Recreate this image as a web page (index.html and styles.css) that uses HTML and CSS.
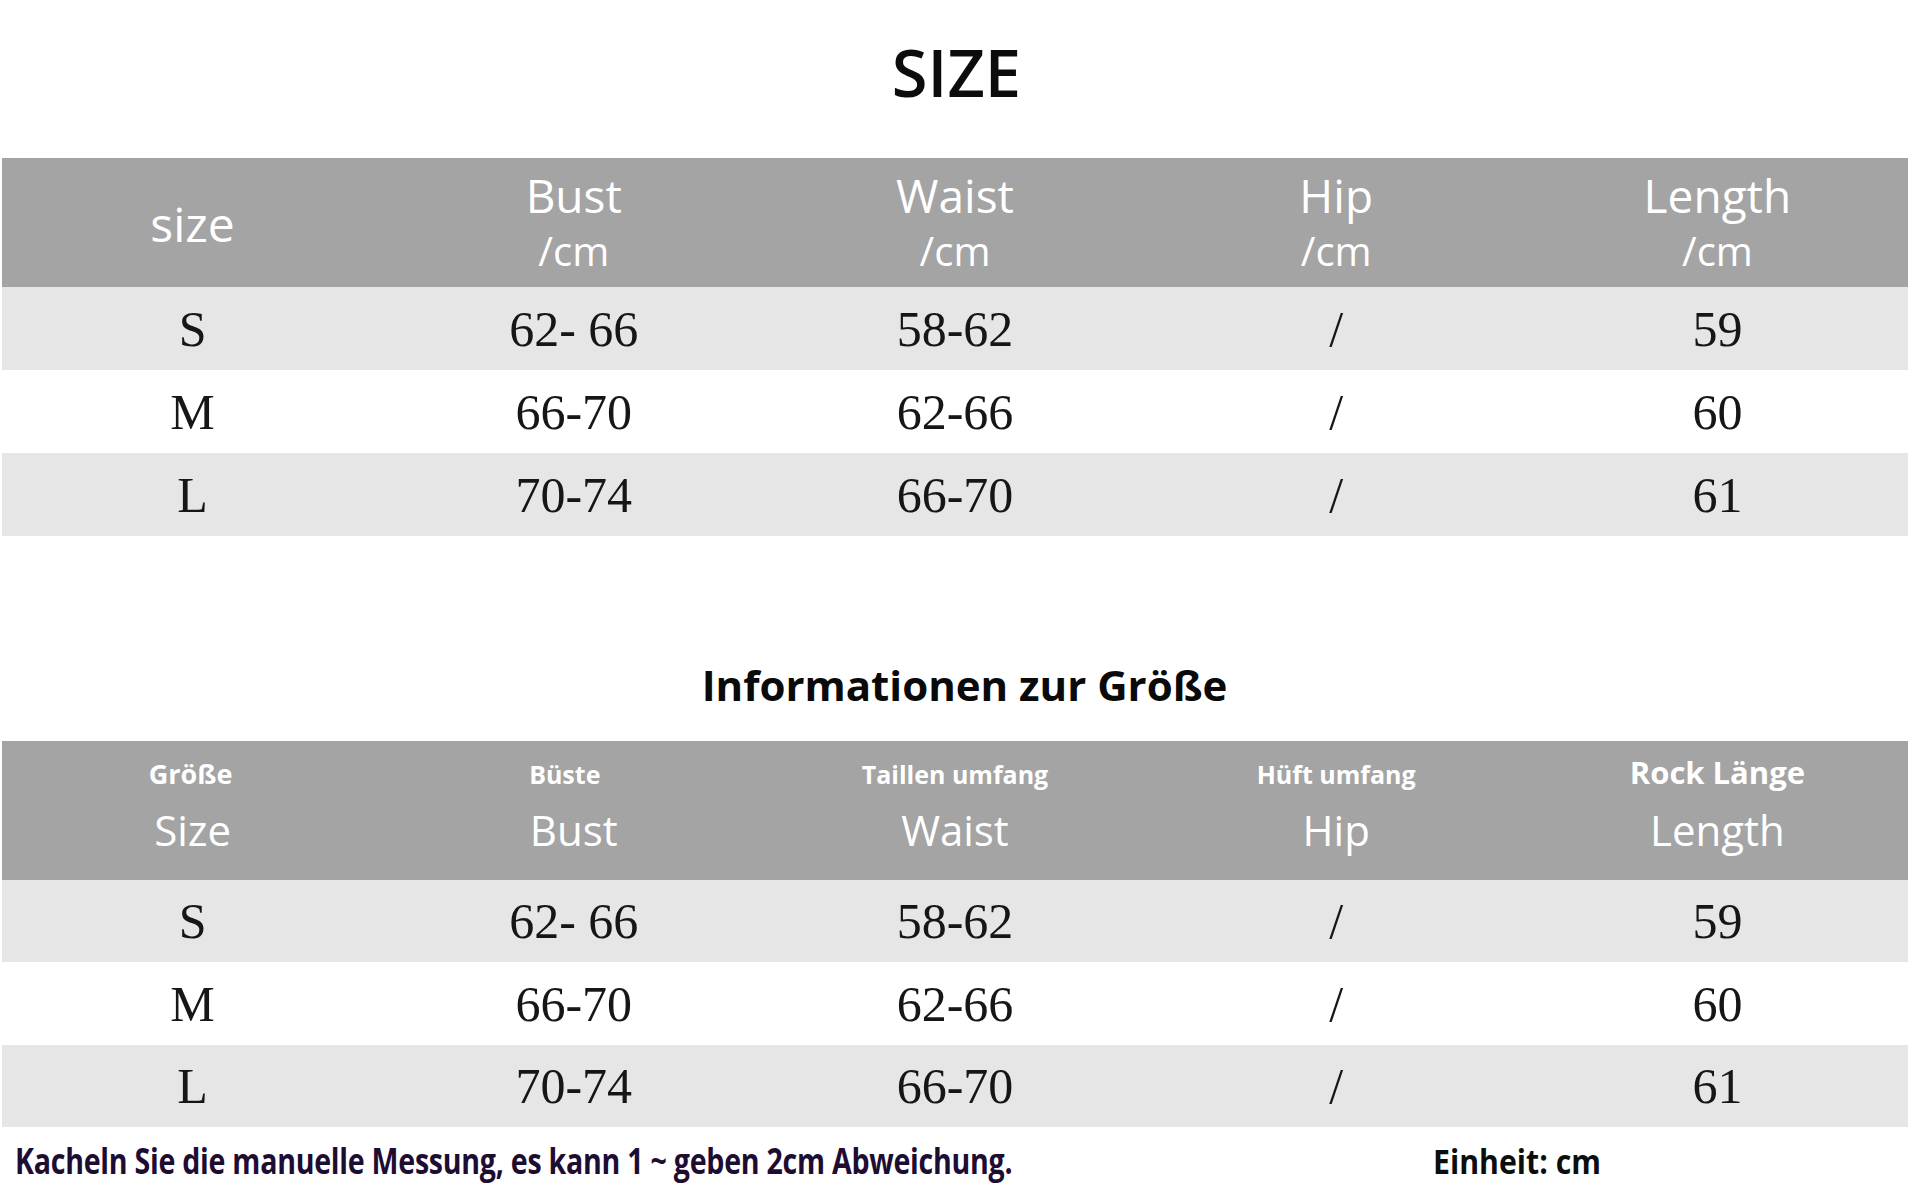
FILE: index.html
```html
<!DOCTYPE html>
<html lang="de">
<head>
<meta charset="utf-8">
<title>SIZE</title>
<link rel="stylesheet" href="styles.css">
</head>
<body>
<div class="page">
  <h1 class="title">SIZE</h1>

  <div class="table">
    <div class="head head-one">
      <div class="hcell hcell-center"><span class="hmain hsize">size</span></div>
      <div class="hcell"><span class="hmain">Bust</span><span class="hunit">/cm</span></div>
      <div class="hcell"><span class="hmain">Waist</span><span class="hunit">/cm</span></div>
      <div class="hcell"><span class="hmain">Hip</span><span class="hunit">/cm</span></div>
      <div class="hcell"><span class="hmain">Length</span><span class="hunit">/cm</span></div>
    </div>
    <div class="row shade"><span>S</span><span>62- 66</span><span>58-62</span><span>/</span><span>59</span></div>
    <div class="row"><span>M</span><span>66-70</span><span>62-66</span><span>/</span><span>60</span></div>
    <div class="row shade"><span>L</span><span>70-74</span><span>66-70</span><span>/</span><span>61</span></div>
  </div>

  <h2 class="subtitle">Informationen zur Größe</h2>

  <div class="table">
    <div class="head head-two">
      <span class="de de-size">Größe</span>
      <span class="de de-bust">Büste</span>
      <span class="de">Taillen umfang</span>
      <span class="de">Hüft umfang</span>
      <span class="de de-rock">Rock Länge</span>
      <span class="en">Size</span>
      <span class="en">Bust</span>
      <span class="en">Waist</span>
      <span class="en">Hip</span>
      <span class="en">Length</span>
    </div>
    <div class="row row-two shade"><span>S</span><span>62- 66</span><span>58-62</span><span>/</span><span>59</span></div>
    <div class="row row-two"><span>M</span><span>66-70</span><span>62-66</span><span>/</span><span>60</span></div>
    <div class="row row-two shade"><span>L</span><span>70-74</span><span>66-70</span><span>/</span><span>61</span></div>
  </div>

  <div class="footer">
    <p class="note"><span class="note-text">Kacheln Sie die manuelle Messung, es kann 1 ~ geben 2cm Abweichung.</span></p>
    <p class="unit"><span class="unit-text">Einheit: cm</span></p>
  </div>
</div>
</body>
</html>
```

FILE: styles.css
```css
* {
  box-sizing: border-box;
}

html, body {
  margin: 0;
  padding: 0;
  background: #ffffff;
}

.page {
  width: 1913px;
  height: 1200px;
  overflow: hidden;
  font-family: "Open Sans", "Liberation Sans", sans-serif;
}

.title {
  margin: 0;
  height: 158px;
  padding-top: 40px;
  font-size: 65px;
  line-height: 1;
  font-weight: 600;
  text-align: center;
  color: #0c0c0c;
}

.table {
  margin-left: 2px;
  width: 1906px;
}

.head {
  background: #a4a4a4;
  color: #ffffff;
  display: grid;
  grid-template-columns: repeat(5, 1fr);
}

.head-one {
  height: 129px;
}

.hcell {
  display: flex;
  flex-direction: column;
  align-items: center;
  padding-top: 14px;
}

.hcell-center {
  padding-top: 0;
  justify-content: center;
}

.hmain {
  font-size: 46px;
  line-height: 1;
}

.hsize {
  font-size: 48px;
  font-weight: 500;
  margin-top: 2px;
}

.hunit {
  font-size: 40px;
  line-height: 1;
  margin-top: 13px;
}

.row {
  display: grid;
  grid-template-columns: repeat(5, 1fr);
  align-items: center;
  justify-items: center;
  height: 83px;
  font-family: "Liberation Serif", "Times New Roman", serif;
  font-size: 50px;
  line-height: 1;
  color: #161616;
  background: #ffffff;
}

.row.shade {
  background: #e6e6e6;
}

.row-two {
  height: 82.4px;
}

.subtitle {
  margin: 128px 0 35px;
  padding-left: 16px;
  font-size: 42px;
  line-height: 1;
  font-weight: 700;
  text-align: center;
  color: #0a0a0a;
}

.head-two {
  height: 139px;
  padding-top: 16px;
  align-items: baseline;
  align-content: start;
  justify-items: center;
  row-gap: 20px;
}

.de {
  font-size: 25px;
  line-height: 1;
  font-weight: 700;
}

.de-size {
  font-size: 27px;
  margin-right: 4px;
}

.de-bust {
  margin-right: 18px;
  margin-bottom: 2px;
}

.de-rock {
  font-size: 31px;
}

.en {
  font-size: 42px;
  line-height: 1;
}

.footer {
  display: grid;
  grid-template-columns: 1418px auto;
  align-items: baseline;
  padding-left: 15px;
  margin-top: 16px;
}

.note, .unit {
  margin: 0;
  line-height: 1;
  font-weight: 700;
  white-space: nowrap;
}

.note {
  font-size: 35px;
  color: #1d0d33;
}

.unit {
  font-size: 34px;
  color: #0d0d0d;
}

.note-text, .unit-text {
  display: inline-block;
  transform-origin: left center;
}

.note-text {
  transform: scaleX(0.816);
  letter-spacing: -0.3px;
}

.unit-text {
  transform: scaleX(0.89);
}
```
